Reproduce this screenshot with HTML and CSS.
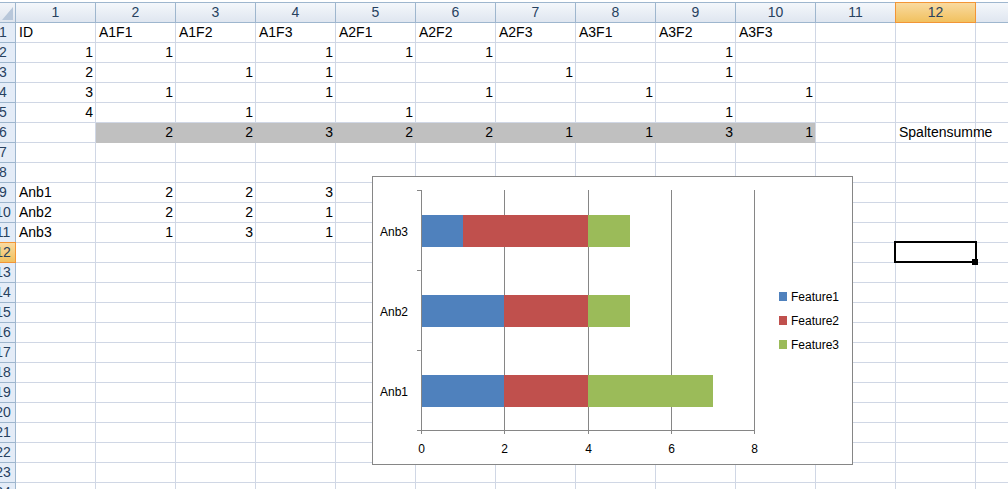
FILE: index.html
```html
<!DOCTYPE html>
<html lang="de">
<head>
<meta charset="utf-8">
<title>Tabelle</title>
<link rel="stylesheet" href="styles.css">
</head>
<body>
<div class="sheet">
  <div class="row hdr">
    <div class="corner"></div>
    <div class="ch">1</div><div class="ch">2</div><div class="ch">3</div><div class="ch">4</div><div class="ch">5</div><div class="ch">6</div><div class="ch">7</div><div class="ch">8</div><div class="ch">9</div><div class="ch">10</div><div class="ch">11</div><div class="ch sel">12</div><div class="ch"></div>
  </div>
  <div class="row">
    <div class="rh"><span>1</span></div>
    <div class="c">ID</div><div class="c">A1F1</div><div class="c">A1F2</div><div class="c">A1F3</div><div class="c">A2F1</div><div class="c">A2F2</div><div class="c">A2F3</div><div class="c">A3F1</div><div class="c">A3F2</div><div class="c">A3F3</div><div class="c"></div><div class="c"></div><div class="c"></div>
  </div>
  <div class="row">
    <div class="rh"><span>2</span></div>
    <div class="c n">1</div><div class="c n">1</div><div class="c"></div><div class="c n">1</div><div class="c n">1</div><div class="c n">1</div><div class="c"></div><div class="c"></div><div class="c n">1</div><div class="c"></div><div class="c"></div><div class="c"></div><div class="c"></div>
  </div>
  <div class="row">
    <div class="rh"><span>3</span></div>
    <div class="c n">2</div><div class="c"></div><div class="c n">1</div><div class="c n">1</div><div class="c"></div><div class="c"></div><div class="c n">1</div><div class="c"></div><div class="c n">1</div><div class="c"></div><div class="c"></div><div class="c"></div><div class="c"></div>
  </div>
  <div class="row">
    <div class="rh"><span>4</span></div>
    <div class="c n">3</div><div class="c n">1</div><div class="c"></div><div class="c n">1</div><div class="c"></div><div class="c n">1</div><div class="c"></div><div class="c n">1</div><div class="c"></div><div class="c n">1</div><div class="c"></div><div class="c"></div><div class="c"></div>
  </div>
  <div class="row">
    <div class="rh"><span>5</span></div>
    <div class="c n">4</div><div class="c"></div><div class="c n">1</div><div class="c"></div><div class="c n">1</div><div class="c"></div><div class="c"></div><div class="c"></div><div class="c n">1</div><div class="c"></div><div class="c"></div><div class="c"></div><div class="c"></div>
  </div>
  <div class="row">
    <div class="rh"><span>6</span></div>
    <div class="c"></div><div class="c n gray">2</div><div class="c n gray">2</div><div class="c n gray">3</div><div class="c n gray">2</div><div class="c n gray">2</div><div class="c n gray">1</div><div class="c n gray">1</div><div class="c n gray">3</div><div class="c n gray last">1</div><div class="c"></div><div class="c">Spaltensumme</div><div class="c"></div>
  </div>
  <div class="row">
    <div class="rh"><span>7</span></div>
    <div class="c"></div><div class="c"></div><div class="c"></div><div class="c"></div><div class="c"></div><div class="c"></div><div class="c"></div><div class="c"></div><div class="c"></div><div class="c"></div><div class="c"></div><div class="c"></div><div class="c"></div>
  </div>
  <div class="row">
    <div class="rh"><span>8</span></div>
    <div class="c"></div><div class="c"></div><div class="c"></div><div class="c"></div><div class="c"></div><div class="c"></div><div class="c"></div><div class="c"></div><div class="c"></div><div class="c"></div><div class="c"></div><div class="c"></div><div class="c"></div>
  </div>
  <div class="row">
    <div class="rh"><span>9</span></div>
    <div class="c">Anb1</div><div class="c n">2</div><div class="c n">2</div><div class="c n">3</div><div class="c"></div><div class="c"></div><div class="c"></div><div class="c"></div><div class="c"></div><div class="c"></div><div class="c"></div><div class="c"></div><div class="c"></div>
  </div>
  <div class="row">
    <div class="rh"><span>10</span></div>
    <div class="c">Anb2</div><div class="c n">2</div><div class="c n">2</div><div class="c n">1</div><div class="c"></div><div class="c"></div><div class="c"></div><div class="c"></div><div class="c"></div><div class="c"></div><div class="c"></div><div class="c"></div><div class="c"></div>
  </div>
  <div class="row">
    <div class="rh"><span>11</span></div>
    <div class="c">Anb3</div><div class="c n">1</div><div class="c n">3</div><div class="c n">1</div><div class="c"></div><div class="c"></div><div class="c"></div><div class="c"></div><div class="c"></div><div class="c"></div><div class="c"></div><div class="c"></div><div class="c"></div>
  </div>
  <div class="row">
    <div class="rh sel"><span>12</span></div>
    <div class="c"></div><div class="c"></div><div class="c"></div><div class="c"></div><div class="c"></div><div class="c"></div><div class="c"></div><div class="c"></div><div class="c"></div><div class="c"></div><div class="c"></div><div class="c act"></div><div class="c"></div>
  </div>
  <div class="row">
    <div class="rh"><span>13</span></div>
    <div class="c"></div><div class="c"></div><div class="c"></div><div class="c"></div><div class="c"></div><div class="c"></div><div class="c"></div><div class="c"></div><div class="c"></div><div class="c"></div><div class="c"></div><div class="c"></div><div class="c"></div>
  </div>
  <div class="row">
    <div class="rh"><span>14</span></div>
    <div class="c"></div><div class="c"></div><div class="c"></div><div class="c"></div><div class="c"></div><div class="c"></div><div class="c"></div><div class="c"></div><div class="c"></div><div class="c"></div><div class="c"></div><div class="c"></div><div class="c"></div>
  </div>
  <div class="row">
    <div class="rh"><span>15</span></div>
    <div class="c"></div><div class="c"></div><div class="c"></div><div class="c"></div><div class="c"></div><div class="c"></div><div class="c"></div><div class="c"></div><div class="c"></div><div class="c"></div><div class="c"></div><div class="c"></div><div class="c"></div>
  </div>
  <div class="row">
    <div class="rh"><span>16</span></div>
    <div class="c"></div><div class="c"></div><div class="c"></div><div class="c"></div><div class="c"></div><div class="c"></div><div class="c"></div><div class="c"></div><div class="c"></div><div class="c"></div><div class="c"></div><div class="c"></div><div class="c"></div>
  </div>
  <div class="row">
    <div class="rh"><span>17</span></div>
    <div class="c"></div><div class="c"></div><div class="c"></div><div class="c"></div><div class="c"></div><div class="c"></div><div class="c"></div><div class="c"></div><div class="c"></div><div class="c"></div><div class="c"></div><div class="c"></div><div class="c"></div>
  </div>
  <div class="row">
    <div class="rh"><span>18</span></div>
    <div class="c"></div><div class="c"></div><div class="c"></div><div class="c"></div><div class="c"></div><div class="c"></div><div class="c"></div><div class="c"></div><div class="c"></div><div class="c"></div><div class="c"></div><div class="c"></div><div class="c"></div>
  </div>
  <div class="row">
    <div class="rh"><span>19</span></div>
    <div class="c"></div><div class="c"></div><div class="c"></div><div class="c"></div><div class="c"></div><div class="c"></div><div class="c"></div><div class="c"></div><div class="c"></div><div class="c"></div><div class="c"></div><div class="c"></div><div class="c"></div>
  </div>
  <div class="row">
    <div class="rh"><span>20</span></div>
    <div class="c"></div><div class="c"></div><div class="c"></div><div class="c"></div><div class="c"></div><div class="c"></div><div class="c"></div><div class="c"></div><div class="c"></div><div class="c"></div><div class="c"></div><div class="c"></div><div class="c"></div>
  </div>
  <div class="row">
    <div class="rh"><span>21</span></div>
    <div class="c"></div><div class="c"></div><div class="c"></div><div class="c"></div><div class="c"></div><div class="c"></div><div class="c"></div><div class="c"></div><div class="c"></div><div class="c"></div><div class="c"></div><div class="c"></div><div class="c"></div>
  </div>
  <div class="row">
    <div class="rh"><span>22</span></div>
    <div class="c"></div><div class="c"></div><div class="c"></div><div class="c"></div><div class="c"></div><div class="c"></div><div class="c"></div><div class="c"></div><div class="c"></div><div class="c"></div><div class="c"></div><div class="c"></div><div class="c"></div>
  </div>
  <div class="row">
    <div class="rh"><span>23</span></div>
    <div class="c"></div><div class="c"></div><div class="c"></div><div class="c"></div><div class="c"></div><div class="c"></div><div class="c"></div><div class="c"></div><div class="c"></div><div class="c"></div><div class="c"></div><div class="c"></div><div class="c"></div>
  </div>
  <div class="row">
    <div class="rh"><span>24</span></div>
    <div class="c"></div><div class="c"></div><div class="c"></div><div class="c"></div><div class="c"></div><div class="c"></div><div class="c"></div><div class="c"></div><div class="c"></div><div class="c"></div><div class="c"></div><div class="c"></div><div class="c"></div>
  </div>

  <div class="chart">
    <svg class="plot" width="479" height="287" viewBox="0 0 479 287">
      <g class="grid">
        <line x1="131.5" y1="13" x2="131.5" y2="257"/>
        <line x1="215.5" y1="13" x2="215.5" y2="257"/>
        <line x1="298.5" y1="13" x2="298.5" y2="257"/>
        <line x1="381.5" y1="13" x2="381.5" y2="257"/>
      </g>
      <g class="bars">
        <rect class="f1" x="48" y="38" width="42" height="32"/>
        <rect class="f2" x="90" y="38" width="125" height="32"/>
        <rect class="f3" x="215" y="38" width="42" height="32"/>
        <rect class="f1" x="48" y="118" width="83" height="32"/>
        <rect class="f2" x="131" y="118" width="84" height="32"/>
        <rect class="f3" x="215" y="118" width="42" height="32"/>
        <rect class="f1" x="48" y="198" width="83" height="32"/>
        <rect class="f2" x="131" y="198" width="84" height="32"/>
        <rect class="f3" x="215" y="198" width="125" height="32"/>
      </g>
      <g class="axis">
        <line x1="48.5" y1="13" x2="48.5" y2="257"/>
        <line x1="44" y1="253.5" x2="382" y2="253.5"/>
        <line x1="44" y1="13.5" x2="48" y2="13.5"/>
        <line x1="44" y1="93.5" x2="48" y2="93.5"/>
        <line x1="44" y1="173.5" x2="48" y2="173.5"/>
      </g>
      <g class="lbl">
        <text x="7" y="59">Anb3</text>
        <text x="7" y="139">Anb2</text>
        <text x="7" y="219">Anb1</text>
      </g>
      <g class="lbl mid">
        <text x="48.5" y="276">0</text>
        <text x="131.5" y="276">2</text>
        <text x="215.5" y="276">4</text>
        <text x="298.5" y="276">6</text>
        <text x="381.5" y="276">8</text>
      </g>
      <g class="legend">
        <rect class="f1" x="406" y="115" width="8" height="9"/>
        <rect class="f2" x="406" y="139" width="8" height="9"/>
        <rect class="f3" x="406" y="163" width="8" height="9"/>
      </g>
      <g class="lbl">
        <text x="418" y="123.5">Feature1</text>
        <text x="418" y="147.5">Feature2</text>
        <text x="418" y="171.5">Feature3</text>
      </g>
    </svg>
  </div>
</div>
</body>
</html>
```
FILE: styles.css
```css
html, body {
  margin: 0;
  padding: 0;
}

body {
  width: 1008px;
  height: 489px;
  overflow: hidden;
  background: #ffffff;
  font-family: "Liberation Sans", Arial, sans-serif;
}

.sheet {
  position: relative;
  width: 1056px;
  padding-top: 2px;
  background: #ffffff;
}

.row {
  display: flex;
  height: 20px;
}

.row.hdr {
  height: 21px;
}

.corner {
  position: relative;
  flex: none;
  width: 16px;
  box-sizing: border-box;
  border-top: 1px solid #9eb6ce;
  border-right: 1px solid #9eb6ce;
  border-bottom: 1px solid #9eb6ce;
  background: linear-gradient(#f2f5f9, #dfe5ee);
}

.corner::after {
  content: "";
  position: absolute;
  right: 2px;
  bottom: 2px;
  width: 0;
  height: 0;
  border-left: 11px solid transparent;
  border-bottom: 13px solid #b8c7da;
}

.ch {
  flex: none;
  width: 80px;
  box-sizing: border-box;
  border-top: 1px solid #9eb6ce;
  border-right: 1px solid #9eb6ce;
  border-bottom: 1px solid #9eb6ce;
  background: linear-gradient(#f4f7fb, #dfe6f0);
  color: #27415f;
  font-size: 14px;
  line-height: 19px;
  text-align: center;
}

.ch.sel {
  background: linear-gradient(#f9daa0, #f1c15f);
  border-color: #f29536;
  border-left: 1px solid #f29536;
  margin-left: -1px;
  width: 81px;
}

.rh {
  flex: none;
  width: 16px;
  box-sizing: border-box;
  border-right: 1px solid #9eb6ce;
  border-bottom: 1px solid #9eb6ce;
  background: #e4ecf7;
  color: #27415f;
  font-size: 14px;
  line-height: 19px;
  overflow: hidden;
  display: flex;
}

.rh span {
  flex: none;
  width: 6px;
  display: flex;
  justify-content: center;
  white-space: nowrap;
}

.rh.sel {
  background: linear-gradient(#f9daa0, #f1c15f);
  border-color: #f29536;
  border-top: 1px solid #f29536;
  margin-top: -1px;
  height: 21px;
}

.c {
  flex: none;
  width: 80px;
  box-sizing: border-box;
  border-right: 1px solid #d0d7e5;
  border-bottom: 1px solid #d0d7e5;
  padding: 0 2px 0 3px;
  font-size: 14px;
  line-height: 19px;
  color: #000000;
  white-space: nowrap;
}

.c.n {
  text-align: right;
}

.c.gray {
  background: #c0c0c0;
  border-right-color: #c0c0c0;
  border-bottom-color: #c0c0c0;
}

.c.gray.last {
  border-right-color: #d0d7e5;
}

.c.act {
  position: relative;
}

.c.act::after {
  content: "";
  position: absolute;
  left: -2px;
  top: -2px;
  right: -2px;
  bottom: -1px;
  border: 2px solid #000000;
}

.c.act::before {
  content: "";
  position: absolute;
  left: 76px;
  top: 16px;
  width: 6px;
  height: 6px;
  background: #000000;
  z-index: 1;
}

.chart {
  position: absolute;
  left: 372px;
  top: 176px;
  width: 481px;
  height: 289px;
  box-sizing: border-box;
  border: 1px solid #868686;
  background: #ffffff;
}

.plot {
  display: block;
}

.grid line,
.axis line {
  stroke: #868686;
  stroke-width: 1;
  shape-rendering: crispEdges;
}

.bars rect,
.legend rect {
  shape-rendering: crispEdges;
}

.f1 { fill: #4f81bd; }
.f2 { fill: #c0504d; }
.f3 { fill: #9bbb59; }

.lbl text {
  font-family: "Liberation Sans", Arial, sans-serif;
  font-size: 12px;
  fill: #000000;
}

.lbl.mid text {
  text-anchor: middle;
}
```
